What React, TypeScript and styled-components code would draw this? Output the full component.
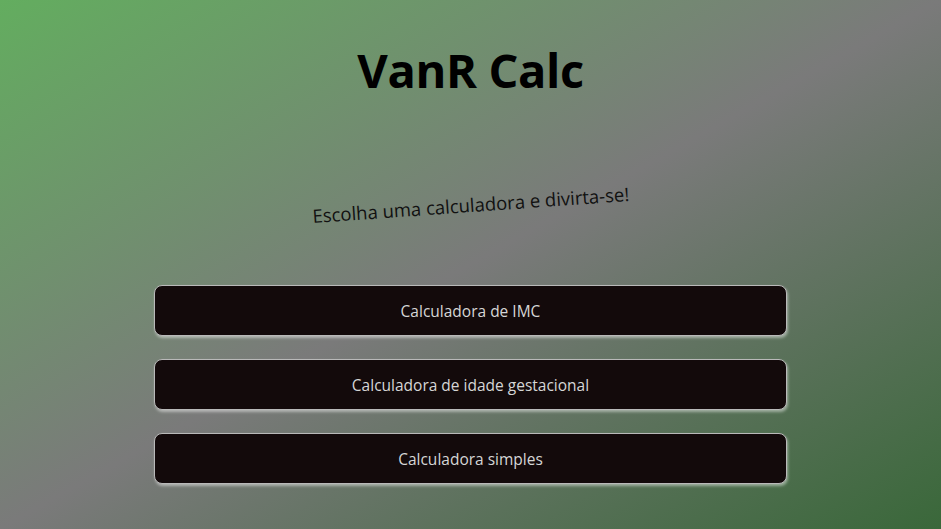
import styled, { createGlobalStyle } from "styled-components";

const GlobalStyle = createGlobalStyle`
  html, body { margin: 0; padding: 0; height: 100%; }
  #root { height: 100%; }
  body { font-family: "Open Sans", "Noto Sans", sans-serif; }
`

const Page = styled("main")`
  min-height: 529px;
  height: 100vh;
  box-sizing: border-box;
  background: linear-gradient(to bottom right, #63ad5f 0%, #7a7a7a 50%, #3a683a 100%);
  display: flex;
  flex-direction: column;
  align-items: center;
  padding-top: 38px;
`

const Title = styled("h1")`
  margin: 0;
  font-size: 47px;
  font-weight: 700;
  color: #000;
  letter-spacing: -0.4px;
`

const Subtitle = styled("p")`
  margin: 90px 0 0 0;
  font-size: 18.5px;
  color: #111;
  transform: rotate(-4deg);
`

const ButtonList = styled("nav")`
  margin-top: 68px;
  width: 633px;
  display: flex;
  flex-direction: column;
  gap: 23px;
`

const CalcButton = styled("button")`
  height: 51px;
  width: 100%;
  background: #130a0b;
  color: #d6d6d6;
  font-family: "Open Sans", "Noto Sans", sans-serif;
  font-size: 15.5px;
  border: 1px solid #b9b9b9;
  border-radius: 8px;
  box-shadow: 1px 2px 3px rgba(255, 255, 255, 0.45);
  cursor: pointer;
`

const calculadoras = [
  "Calculadora de IMC",
  "Calculadora de idade gestacional",
  "Calculadora simples",
]

const App = () => {
  return (
    <>
      <GlobalStyle />
      <Page>
        <Title>VanR Calc</Title>
        <Subtitle>Escolha uma calculadora e divirta-se!</Subtitle>
        <ButtonList>
          {calculadoras.map((nome) => (
            <CalcButton key={nome}>{nome}</CalcButton>
          ))}
        </ButtonList>
      </Page>
    </>
  )
}

export default App
